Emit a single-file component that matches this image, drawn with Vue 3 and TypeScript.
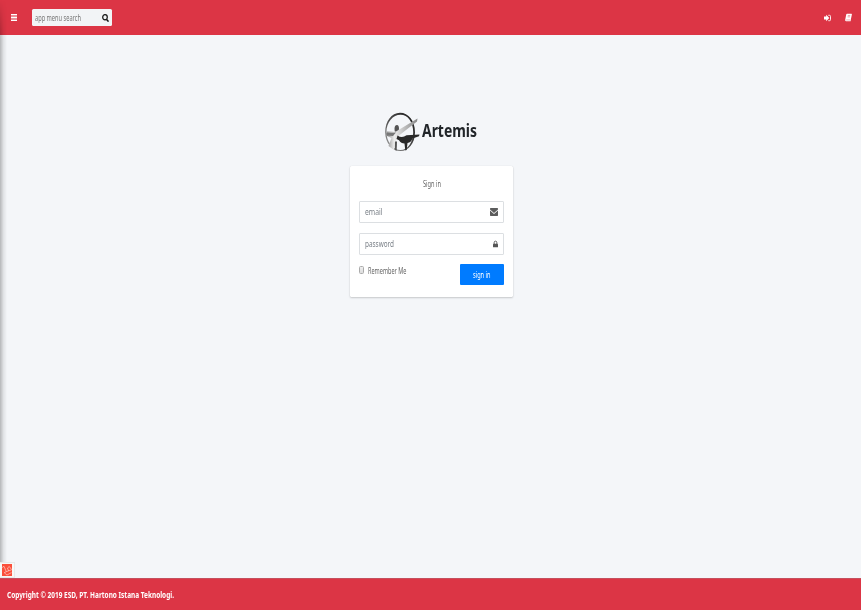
<script setup lang="ts">
import type { Directive } from 'vue'

// Condenses a label horizontally so that it fills the given width.
const vFit: Directive<HTMLElement, number> = {
  mounted(el, { value }) {
    const inner = el.firstElementChild as HTMLElement
    el.style.width = `${value}px`
    inner.style.transform = `scaleX(${value / inner.getBoundingClientRect().width})`
  },
}
</script>

<template>
  <div class="page">
    <header class="navbar">
      <svg class="bars" viewBox="0 0 6 7"><path d="M0 0h6v7H0Z" fill="#eb8f98" /><path d="M0 .5h6M0 3.500h6M0 6.500h6" stroke="#fff" /></svg>
      <div class="search">
        <span v-fit="46" class="fit"><span>app menu search</span></span>
        <svg class="glass" viewBox="0 0 7 8"><ellipse cx="3" cy="3.300" rx="2.300" ry="2.600" fill="none" stroke="#111" stroke-width="1.200" /><path d="M4.600 5.400L6.500 7.600" stroke="#111" stroke-width="1.500" /></svg>
      </div>
      <nav class="actions">
        <svg class="login" viewBox="0 0 7 8"><path d="M4.300 1.300H5.500Q6.500 1.300 6.500 2.300V5.700Q6.500 6.700 5.500 6.700H4.300" fill="none" stroke="#fff" stroke-width=".9" /><path d="M0 2.600H2.200V.7L5.300 4 2.200 7.300V5.400H0Z" fill="#fff" /></svg>
        <svg class="book" viewBox="0 0 8 9"><path d="M2.3 .3H7.4Q8 .3 7.900 .9L6.700 6.800 6.400 8.700H1.100Q0 8.600 .2 7.300L1.400 1.100Q1.600.3 2.300.3Z" fill="#fff" /><path d="M3.200 2.300h2.800M2.900 3.800h2.800M1.300 7.300h4.500" stroke="#dc3545" stroke-width=".5" /></svg>
      </nav>
    </header>

    <main class="content">
      <div class="brand">
        <svg class="logo" viewBox="0 0 35 40">
          <defs>
            <linearGradient id="ring" x1="0" y1="1" x2="1" y2="0"><stop offset="0" stop-color="#aaa" /><stop offset=".4" stop-color="#555" /><stop offset="1" stop-color="#171717" /></linearGradient>
            <linearGradient id="wing" x1="0" y1="0" x2="1" y2="0"><stop offset="0" stop-color="#888" /><stop offset=".25" stop-color="#eee" /><stop offset=".6" stop-color="#bbb" /><stop offset="1" stop-color="#888" /></linearGradient>
          </defs>
          <path fill="url(#ring)" fill-rule="evenodd" d="M15 .8C23.500 .8 30 9 30 20.200S23.500 39 15.500 39 .2 31 .2 20.200 6.500.8 15 .8ZM15.500 2.700C8 2.700 1.400 10 1.400 20S8 38 15.500 38 28.200 30 28.200 20 23 2.700 15.500 2.700Z" />
          <path fill="#555" d="M9.500 17Q9.500 13 12 13Q14 13 14 17L13 21 10 22Z" />
          <path fill="url(#wing)" d="M1.500 19.500L11 19.500 32.500 6.600 32 9.500 21 18 14 23.500 10.500 29 9 38 3.500 34 6.500 26 2 24Z" />
          <path fill="#292929" d="M12.500 23.500Q17 26.700 21.500 23.300L34.500 22.500 34 24.300 27.500 26.500Q26 30.700 22.500 31L21.700 38 20.300 38.500 19.500 31.500Q16 31.500 14 28.300L11.500 27Z" />
          <path fill="#777" d="M1.500 21L11 20.500 8 24 1.500 23.500Z" />
          <path fill="#555" d="M10 29.500L12 29.500 11.700 38.700 9.800 38Z" />
        </svg>
        <h1 v-fit="55" class="fit title"><span>Artemis</span></h1>
      </div>

      <form class="card">
        <p class="heading"><span v-fit="18" class="fit"><span>Sign in</span></span></p>
        <div class="field">
          <span v-fit="17.500" class="fit"><span>email</span></span>
          <svg class="envelope" viewBox="0 0 8 8"><path fill="#5c5c5c" d="M.6 0H7.400Q8 0 8 .7V1.500L4 4.900 0 1.500V.7Q0 0 .6 0ZM0 2.600L4 6 8 2.600V7.300Q8 8 7.400 8H.6Q0 8 0 7.300Z" /></svg>
        </div>
        <div class="field">
          <span v-fit="29" class="fit"><span>password</span></span>
          <svg class="lock" viewBox="0 0 6 8"><path d="M1.400 4V2.300Q1.400.6 3 .6T4.600 2.300V4" fill="none" stroke="#555" stroke-width="1.100" /><rect y="3.600" width="6" height="4.400" rx=".6" fill="#555" /></svg>
        </div>
        <div class="submit-row">
          <label class="remember">
            <i class="box"></i>
            <span v-fit="38.500" class="fit"><span>Remember Me</span></span>
          </label>
          <button type="button" class="submit"><span v-fit="17.500" class="fit"><span>sign in</span></span></button>
        </div>
      </form>
    </main>

    <footer class="footer">
      <strong v-fit="167" class="fit"><span>Copyright © 2019 ESD, PT. Hartono Istana Teknologi.</span></strong>
    </footer>

    <div class="edge"></div>
    <div class="debug">
      <svg viewBox="0 0 10 12"><rect width="10" height="12" fill="#fb503b" /><path d="M.2 3.500L2 2.300 4.300 7.700 9.500 5.800M2.200 8.700L4.300 7.700M5.500 4L7.300 2.500 9.500 5.500M2.300 8.800L5 11 9.500 8.600M5.500 4L6.600 7" fill="none" stroke="#fff" stroke-width=".5" /></svg>
    </div>
  </div>
</template>

<style>
body {
  margin: 0;
}
</style>

<style scoped>
.page {
  position: relative;
  display: flex;
  flex-direction: column;
  height: 610px;
  overflow: hidden;
  background: #f4f6f9;
  color: #212529;
  font-family: 'Noto Sans', 'Open Sans', sans-serif;
  font-size: 8px;
}
svg {
  display: block;
  flex: none;
}
.fit {
  display: block;
  flex: none;
  white-space: nowrap;
}
.fit > span {
  display: inline-block;
  transform-origin: 0 50%;
}
.navbar {
  box-sizing: border-box;
  display: flex;
  align-items: center;
  height: 35px;
  padding: 0 9px 0 11px;
  background: #dc3545;
}
.bars {
  width: 6px;
  height: 7px;
}
.search {
  box-sizing: border-box;
  display: flex;
  align-items: center;
  justify-content: space-between;
  width: 80px;
  height: 17px;
  margin-left: 15px;
  padding: 0 3px;
  border-radius: 1.5px;
  background: #f2f4f6;
  color: #777;
  line-height: 16px;
}
.glass {
  width: 7px;
  height: 8px;
}
.actions {
  display: flex;
  align-items: center;
  gap: 14px;
  margin-left: auto;
}
.login {
  width: 7px;
  height: 8px;
}
.book {
  width: 7px;
  height: 9px;
}
.content {
  flex: 1;
  display: flex;
  flex-direction: column;
  align-items: center;
}
.brand {
  display: flex;
  align-items: flex-start;
  gap: 2px;
  height: 40px;
  margin-top: 77px;
}
.logo {
  width: 35px;
  height: 40px;
}
.title {
  margin: 0;
  font-size: 18px;
  font-weight: 700;
  line-height: 36px;
}
.card {
  box-sizing: border-box;
  width: 163px;
  height: 131px;
  margin: 14px 0 0 2px;
  padding: 10px 9px 0;
  border-radius: 1.5px;
  background: #fff;
  box-shadow: 0 0 1px rgba(0, 0, 0, 0.12), 0 1px 2px rgba(0, 0, 0, 0.18);
  color: #666;
}
.heading {
  display: flex;
  justify-content: center;
  height: 16px;
  margin: 0 0 9.4px;
  line-height: 16px;
}
.field {
  box-sizing: border-box;
  display: flex;
  align-items: center;
  justify-content: space-between;
  height: 22px;
  margin-bottom: 9.8px;
  padding: 0 5px;
  border: 1px solid #dcdfe2;
  border-radius: 1px;
  color: #7b8188;
  font-size: 9px;
  line-height: 20px;
}
.envelope {
  width: 8px;
  height: 8px;
}
.lock {
  width: 5px;
  height: 8px;
}
.submit-row {
  display: flex;
  justify-content: space-between;
  margin-top: -0.6px;
}
.remember {
  display: flex;
  align-items: center;
  gap: 4px;
  height: 12px;
}
.box {
  box-sizing: border-box;
  width: 5px;
  height: 8px;
  border: 1px solid #aaa;
  border-radius: 1.5px;
  background: linear-gradient(#eee, #ddd);
}
.submit {
  display: flex;
  align-items: center;
  justify-content: center;
  width: 44px;
  height: 21px;
  padding: 0 0 1px;
  border: 0;
  border-radius: 1px;
  background: #007bff;
  color: #fff;
  font: inherit;
}
.footer {
  box-sizing: border-box;
  display: flex;
  align-items: center;
  height: 32px;
  padding-left: 7px;
  border-top: 1px solid #c4505e;
  background: #dc3545;
  color: #fff;
  line-height: 16px;
}
.edge {
  position: absolute;
  top: 0;
  left: 0;
  width: 7px;
  height: 578px;
  background: linear-gradient(to right, rgba(0, 0, 0, 0.26), rgba(0, 0, 0, 0.08) 50%, transparent);
  mask-image: linear-gradient(transparent, #000 40px);
}
.debug {
  box-sizing: border-box;
  position: absolute;
  left: 0;
  top: 562px;
  width: 15px;
  height: 16px;
  padding: 1px 3px 2px 2px;
  border: 1px solid #e7e9e9;
  border-left: 0;
  background: #f8f8f6;
}
.debug svg {
  width: 10px;
  height: 12px;
}
</style>
